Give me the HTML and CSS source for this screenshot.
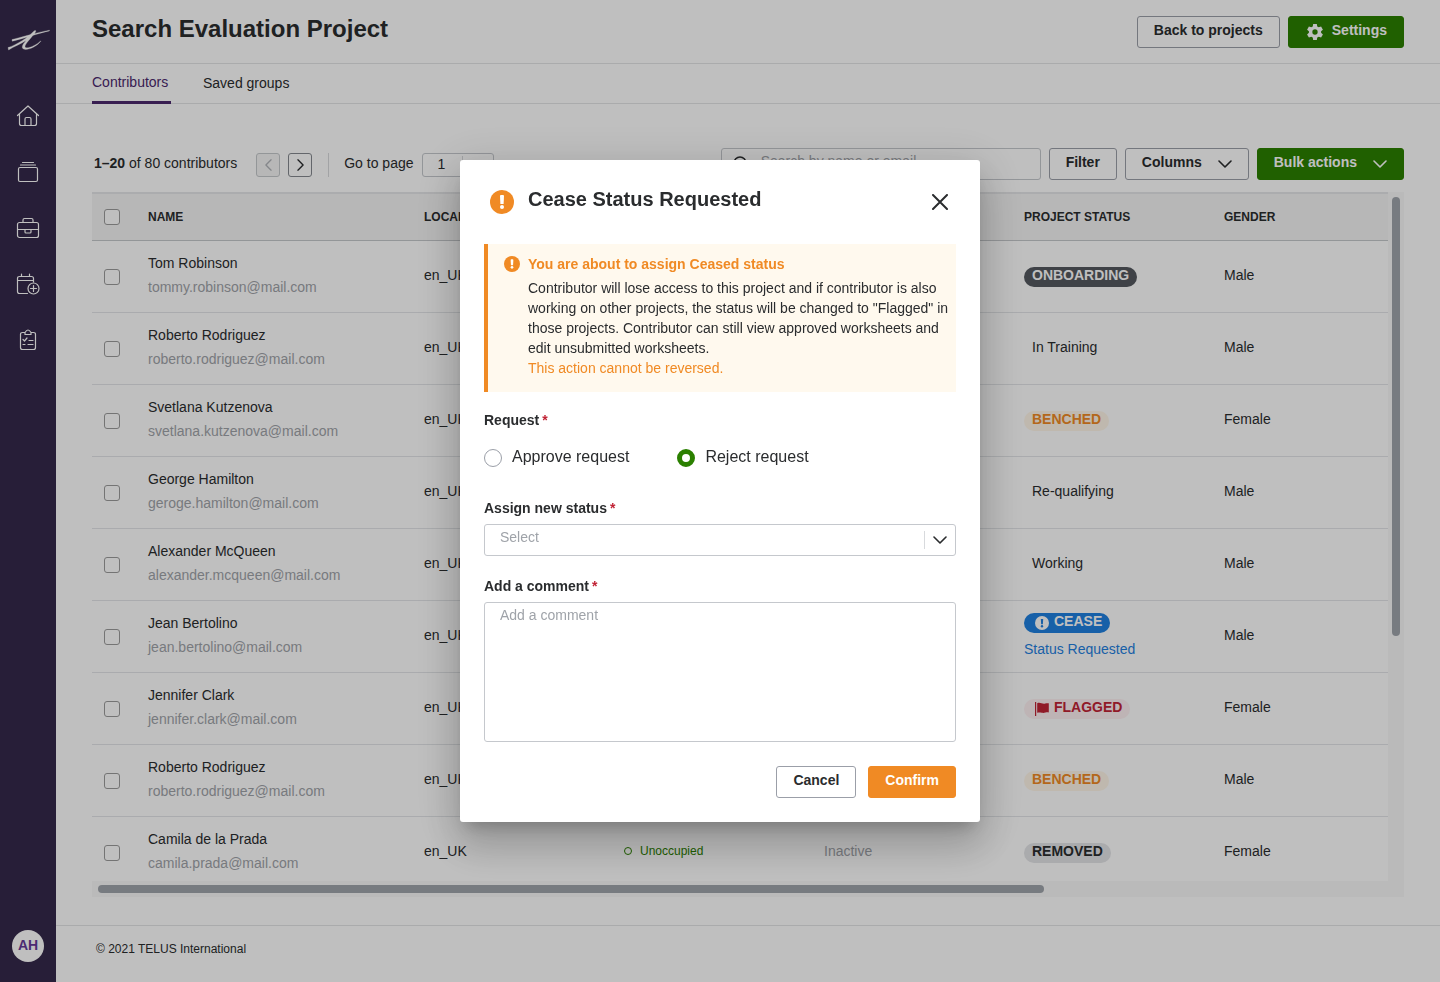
FILE: index.html
```html
<!DOCTYPE html>
<html lang="en">
<head>
<meta charset="utf-8">
<title>Search Evaluation Project</title>
<link rel="stylesheet" href="styles.css">
</head>
<body>
<div class="app">
  <nav class="sidebar" aria-label="Main">
    <a class="logo" href="#" aria-label="TELUS International">
      <svg width="44" height="24" viewBox="0 0 44 24" fill="#fff" stroke="#fff" stroke-width=".3"><path d="M6 11.6C14 9.6 28 5.2 43.500 2.200L43.400 2.900C33 5 17 10.800 6.200 13.200ZM2 19.600C11 16.600 22 9.500 27.500 3.400C29 1.800 30.600 2.400 29.400 4.200C26.500 8.700 18.500 16.200 19 18.800C19.600 21.800 30 17.800 34.600 12.900L34.900 13.200C30 19.200 21 22.600 17.600 21C14.600 19.400 17.500 15.400 20 12.400C14 16.600 8 18.200 2.600 22Z"/></svg>
    </a>
    <div class="nav-links">
      <a class="nav-link" href="#" aria-label="Home"><svg class="icon-line" width="24" height="24" viewBox="0 0 24 24"><path d="M1.500 11.500 12 2l10.500 9.500M3.500 10v9.500q0 2 2 2h13q2 0 2-2V10M9 21.500V15q0-1.500 1.500-1.500h3q1.500 0 1.500 1.500v6.500"/></svg></a>
      <a class="nav-link" href="#" aria-label="Projects"><svg class="icon-line" width="24" height="24" viewBox="0 0 24 24"><rect x="2.500" y="7.500" width="19" height="14" rx="1.500"/><path d="M4.500 5h15M6.500 2.500h11"/></svg></a>
      <a class="nav-link" href="#" aria-label="Jobs"><svg class="icon-line" width="24" height="24" viewBox="0 0 24 24"><rect x="1.500" y="6.500" width="21" height="15" rx="2"/><path d="M7 6.500V4q0-1.500 1.500-1.500h7Q17 2.500 17 4v2.500M1.500 13.500h21M9 13.500V16q0 1 1 1h4q1 0 1-1v-2.500"/></svg></a>
      <a class="nav-link" href="#" aria-label="Schedule"><svg class="icon-line" width="24" height="24" viewBox="0 0 24 24"><path d="M11.500 21.500h-8q-2 0-2-2v-13q0-2 2-2h12q2 0 2 2V10M1.500 8.500h16M5.500 2v2.500M13.500 2v2.500"/><circle cx="17.500" cy="16.500" r="5.500"/><path d="M17.500 13.500v6M14.500 16.500h6"/></svg></a>
      <a class="nav-link" href="#" aria-label="Tasks"><svg class="icon-line" width="24" height="24" viewBox="0 0 24 24"><path d="M9 4.500H6.500q-2 0-2 2v13q0 2 2 2h11q2 0 2-2v-13q0-2-2-2H15M9 6.500v-2q3-5 6 0v2ZM7 11.500l1.500 1.500 2.500-3M13 12.500h4M7 16.500h2M12 16.500h5"/></svg></a>
    </div>
    <button class="avatar" type="button" aria-label="Account AH">AH</button>
  </nav>

  <div class="page">
    <header class="page-header">
      <h1 class="page-title">Search Evaluation Project</h1>
      <div class="button-row">
        <button class="btn" type="button">Back to projects</button>
        <button class="btn btn-green btn-icon" type="button"><svg width="20" height="20" viewBox="0 0 24 24" fill="currentColor"><path fill-rule="evenodd" d="M9.800 2.500h4.400l.5 2.900 1.800 1 2.800-1 2.200 3.800-2.200 1.900v1.900l2.200 1.900-2.200 3.800-2.800-1-1.800 1-.5 2.900H9.800l-.5-2.900-1.800-1-2.800 1-2.200-3.800L4.700 13v-1.900L2.500 9.200l2.200-3.800 2.800 1 1.800-1ZM12 8.800a3.200 3.200 0 1 0 0 6.400 3.200 3.200 0 0 0 0-6.400Z"/></svg><span>Settings</span></button>
      </div>
    </header>
    <nav class="tabs" aria-label="Project sections">
      <a class="tab tab-active" href="#">Contributors</a>
      <a class="tab" href="#">Saved groups</a>
    </nav>

    <main class="content">
      <div class="toolbar">
        <div class="pager">
          <p class="pager-count"><strong>1–20</strong> of 80 contributors</p>
          <button class="step step-disabled" type="button" aria-label="Previous page" disabled><svg width="7" height="12" viewBox="0 0 8 14"><path class="stroke" d="M7 1 1 7l6 6"/></svg></button>
          <button class="step" type="button" aria-label="Next page"><svg width="7" height="12" viewBox="0 0 8 14"><path class="stroke" d="m1 1 6 6-6 6"/></svg></button>
          <label class="goto" for="goto-page">Go to page</label>
          <span class="select-wrap select-small">
            <select class="select" id="goto-page"><option>1</option></select>
          </span>
        </div>
        <div class="button-row">
          <span class="search">
            <svg class="search-icon" width="16" height="16" viewBox="0 0 16 16"><circle class="stroke" cx="7" cy="7" r="6"/><path class="stroke" d="m12 12 3 3"/></svg>
            <input class="search-input" type="search" aria-label="Search" placeholder="Search by name or email">
          </span>
          <button class="btn" type="button">Filter</button>
          <button class="btn btn-menu" type="button">Columns<svg width="14" height="8" viewBox="0 0 14 8"><path class="stroke" d="m1 1 6 6 6-6"/></svg></button>
          <button class="btn btn-green btn-menu" type="button">Bulk actions<svg width="14" height="8" viewBox="0 0 14 8"><path class="stroke" d="m1 1 6 6 6-6"/></svg></button>
        </div>
      </div>

      <div class="table-frame">
        <div class="table-view">
          <table class="table">
            <colgroup><col class="col-check"><col class="col-name"><col class="col-mid"><col class="col-mid"><col class="col-mid"><col class="col-mid"><col></colgroup>
            <thead>
              <tr><th><input class="check" type="checkbox" aria-label="Select all"></th><th>NAME</th><th>LOCALE</th><th></th><th></th><th>PROJECT STATUS</th><th>GENDER</th></tr>
            </thead>
            <tbody>
              <tr><td class="cell-check"><input class="check" type="checkbox" aria-label="Select Tom Robinson"></td><td><div class="name">Tom Robinson</div><div class="mail">tommy.robinson@mail.com</div></td><td>en_UK</td><td></td><td></td><td class="cell-status"><span class="badge badge-dark">ONBOARDING</span></td><td>Male</td></tr>
              <tr><td class="cell-check"><input class="check" type="checkbox" aria-label="Select Roberto Rodriguez"></td><td><div class="name">Roberto Rodriguez</div><div class="mail">roberto.rodriguez@mail.com</div></td><td>en_UK</td><td></td><td></td><td class="cell-status"><span class="badge badge-plain">In Training</span></td><td>Male</td></tr>
              <tr><td class="cell-check"><input class="check" type="checkbox" aria-label="Select Svetlana Kutzenova"></td><td><div class="name">Svetlana Kutzenova</div><div class="mail">svetlana.kutzenova@mail.com</div></td><td>en_UK</td><td></td><td></td><td class="cell-status"><span class="badge badge-orange">BENCHED</span></td><td>Female</td></tr>
              <tr><td class="cell-check"><input class="check" type="checkbox" aria-label="Select George Hamilton"></td><td><div class="name">George Hamilton</div><div class="mail">geroge.hamilton@mail.com</div></td><td>en_UK</td><td></td><td></td><td class="cell-status"><span class="badge badge-plain">Re-qualifying</span></td><td>Male</td></tr>
              <tr><td class="cell-check"><input class="check" type="checkbox" aria-label="Select Alexander McQueen"></td><td><div class="name">Alexander McQueen</div><div class="mail">alexander.mcqueen@mail.com</div></td><td>en_UK</td><td></td><td></td><td class="cell-status"><span class="badge badge-plain">Working</span></td><td>Male</td></tr>
              <tr><td class="cell-check"><input class="check" type="checkbox" aria-label="Select Jean Bertolino"></td><td><div class="name">Jean Bertolino</div><div class="mail">jean.bertolino@mail.com</div></td><td>en_UK</td><td></td><td></td><td class="cell-status"><span class="badge badge-blue"><svg width="14" height="14" viewBox="0 0 24 24"><circle cx="12" cy="12" r="12" fill="#fff"/><path fill="#1f80e0" d="M10 5h4l-.5 9h-3Z"/><circle cx="12" cy="17.500" r="2" fill="#1f80e0"/></svg><span>CEASE</span></span><div class="requested">Status Requested</div></td><td>Male</td></tr>
              <tr><td class="cell-check"><input class="check" type="checkbox" aria-label="Select Jennifer Clark"></td><td><div class="name">Jennifer Clark</div><div class="mail">jennifer.clark@mail.com</div></td><td>en_UK</td><td></td><td></td><td class="cell-status"><span class="badge badge-red"><svg width="14" height="14" viewBox="0 0 14 14" fill="currentColor"><path d="M0 0h1.200v14H0ZM2.200 1.200c3-1.500 5 1.300 8 .4 1.500-.5 2-.5 3.600-.4v9.200c-3-.4-4 .9-7 .4-2-.4-3-.4-4.600 0Z"/></svg><span>FLAGGED</span></span></td><td>Female</td></tr>
              <tr><td class="cell-check"><input class="check" type="checkbox" aria-label="Select Roberto Rodriguez"></td><td><div class="name">Roberto Rodriguez</div><div class="mail">roberto.rodriguez@mail.com</div></td><td>en_UK</td><td></td><td></td><td class="cell-status"><span class="badge badge-orange">BENCHED</span></td><td>Male</td></tr>
              <tr><td class="cell-check"><input class="check" type="checkbox" aria-label="Select Camila de la Prada"></td><td><div class="name">Camila de la Prada</div><div class="mail">camila.prada@mail.com</div></td><td>en_UK</td><td><span class="occupancy">Unoccupied</span></td><td class="inactive">Inactive</td><td class="cell-status"><span class="badge badge-grey">REMOVED</span></td><td>Female</td></tr>
            </tbody>
          </table>
        </div>
        <div class="track track-y"><div class="thumb" style="height: 64.6%"></div></div>
        <div class="track track-x"><div class="thumb" style="width: 72.8%"></div></div>
      </div>
    </main>

    <footer class="footer">© 2021 TELUS International</footer>
  </div>
</div>

<div class="overlay">
  <form class="dialog" role="dialog" aria-modal="true" aria-labelledby="dialog-title">
    <header class="dialog-header">
      <svg width="24" height="24" viewBox="0 0 24 24"><circle cx="12" cy="12" r="12" fill="#f08a24"/><path fill="#fff" d="M10 6q0-1 1-1h2q1 0 1 1l-.4 8h-3.200Z"/><circle cx="12" cy="17" r="2" fill="#fff"/></svg>
      <h2 class="dialog-title" id="dialog-title">Cease Status Requested</h2>
      <button class="close" type="button" aria-label="Close"><svg width="16" height="16" viewBox="0 0 16 16"><path class="stroke-bold" d="m1 1 14 14M15 1 1 15"/></svg></button>
    </header>
    <section class="alert">
      <svg class="alert-icon" width="16" height="16" viewBox="0 0 24 24"><circle cx="12" cy="12" r="12" fill="#f08a24"/><path fill="#fff" d="M10 6q0-1 1-1h2q1 0 1 1l-.4 8h-3.200Z"/><circle cx="12" cy="17" r="2" fill="#fff"/></svg>
      <div>
        <h3 class="alert-title">You are about to assign Ceased status</h3>
        <p>Contributor will lose access to this project and if contributor is also working on other projects, the status will be changed to "Flagged" in those projects. Contributor can still view approved worksheets and edit unsubmitted worksheets.</p>
        <p class="alert-warn">This action cannot be reversed.</p>
      </div>
    </section>
    <fieldset class="request">
      <legend class="field-label">Request<span class="star">*</span></legend>
      <div class="radios">
        <label class="radio-label"><input class="radio" type="radio" name="request"><span>Approve request</span></label>
        <label class="radio-label"><input class="radio" type="radio" name="request" checked><span>Reject request</span></label>
      </div>
    </fieldset>
    <div class="field">
      <label class="field-label" for="status">Assign new status<span class="star">*</span></label>
      <span class="select-wrap">
        <select class="select select-empty" id="status"><option>Select</option></select>
        <svg class="select-arrow" width="14" height="8" viewBox="0 0 14 8"><path class="stroke" d="m1 1 6 6 6-6"/></svg>
      </span>
    </div>
    <div class="field">
      <label class="field-label" for="comment">Add a comment<span class="star">*</span></label>
      <textarea class="textarea" id="comment" placeholder="Add a comment"></textarea>
    </div>
    <div class="dialog-actions">
      <button class="btn" type="button">Cancel</button>
      <button class="btn btn-orange" type="submit">Confirm</button>
    </div>
  </form>
</div>
</body>
</html>
```
FILE: styles.css
```css
*, *::before, *::after { box-sizing: border-box; }

body {
  margin: 0;
  background: #fff;
  color: #2a2c2e;
  font: 14px/20px "Liberation Sans", Arial, sans-serif;
}

h1, h2, h3, p { margin: 0; }
a { color: inherit; text-decoration: none; }
button, input, select, textarea { font: inherit; color: inherit; }
svg { display: block; flex: none; }

.stroke { fill: none; stroke: currentColor; stroke-width: 1.6; stroke-linecap: round; stroke-linejoin: round; }
.stroke-bold { fill: none; stroke: currentColor; stroke-width: 2; stroke-linecap: round; }
.icon-line { fill: none; stroke: #fff; stroke-width: 1.2; stroke-linecap: round; stroke-linejoin: round; }

.app { display: flex; height: 100vh; }

/* Sidebar */
.sidebar {
  display: flex;
  flex-direction: column;
  align-items: center;
  flex: none;
  width: 56px;
  padding: 28px 0 20px;
  background: #35294b;
}
.logo { margin-bottom: 52px; }
.nav-links { display: grid; gap: 32px; }
.nav-link { display: block; }
.avatar {
  width: 32px;
  height: 32px;
  margin-top: auto;
  padding: 0 0 2px;
  border: 0;
  border-radius: 50%;
  background: #fff;
  color: #66389a;
  font-weight: 700;
}

/* Page frame */
.page { display: flex; flex-direction: column; flex: 1; min-width: 0; }
.page-header {
  display: flex;
  justify-content: space-between;
  align-items: flex-start;
  padding: 16px 36px 15px;
  border-bottom: 1px solid #e3e4e6;
}
.page-title { font-size: 24px; line-height: 26px; }
.button-row { display: flex; gap: 8px; }

.tabs {
  display: flex;
  gap: 32px;
  height: 40px;
  padding: 0 36px;
  border-bottom: 1px solid #e3e4e6;
}
.tab { min-width: 79px; height: 40px; padding-top: 9px; }
.tab-active { padding-top: 8px; border-bottom: 3px solid #4b286d; color: #4b286d; }

.content { display: flex; flex-direction: column; flex: 1; min-height: 0; padding: 44px 36px 28px; }
.footer { padding: 13px 40px 23px; border-top: 1px solid #e3e4e6; font-size: 12px; }

/* Buttons */
.btn {
  padding: 3px 16px 7px;
  border: 1px solid #9b9fa8;
  border-radius: 3px;
  background: #fff;
  font-size: 14px;
  font-weight: 700;
  line-height: 20px;
  white-space: nowrap;
}
.btn-green { border-color: #2b8000; background: #2b8000; color: #fff; }
.btn-orange { border-color: #f08a24; background: #f08a24; color: #fff; }
.btn-icon { display: flex; gap: 7px; }
.btn-icon svg { margin: 2px 0 -2px; }
.btn-menu { display: flex; justify-content: space-between; gap: 16px; }
.btn-menu svg { align-self: center; margin-top: 4px; }

/* Toolbar */
.toolbar { display: flex; justify-content: space-between; margin-bottom: 12px; }
.pager { display: flex; align-items: flex-start; padding: 5px 0 0 2px; }
.pager-count { margin-right: 19px; }
.step {
  display: grid;
  place-items: center;
  width: 24px;
  height: 24px;
  margin-right: 8px;
  padding: 0;
  border: 1px solid #85898f;
  border-radius: 3px;
  background: #fff;
}
.step-disabled { border-color: #c5c8cb; background: #f5f5f5; color: #b2b5ba; }
.goto { height: 24px; margin: 0 8px; padding-left: 15px; border-left: 1px solid #d8dadd; }
.search { display: flex; align-items: center; gap: 12px; width: 320px; height: 32px; padding: 0 11px; border: 1px solid #c5c8cd; border-radius: 3px; }
.search-input { flex: 1; min-width: 0; padding: 0 0 6px; border: 0; outline: 0; background: none; }
.search-input::placeholder, .textarea::placeholder { color: #9fa3a9; opacity: 1; }

/* Table */
.table-frame { display: grid; grid-template: minmax(0, 1fr) 16px / minmax(0, 1fr) 16px; flex: 1; min-height: 0; }
.table-view { overflow: hidden; }
.table { width: 100%; border-collapse: separate; border-spacing: 0; table-layout: fixed; }
.col-check { width: 44px; }
.col-name { width: 276px; }
.col-mid { width: 200px; }
.table th {
  height: 49px;
  padding: 0 0 0 12px;
  border-top: 2px solid #e5e6e8;
  border-bottom: 1px solid #c5c8cb;
  background: #f5f5f5;
  font-size: 12px;
  text-align: left;
}
.table td { height: 72px; padding: 0 0 4px 12px; border-bottom: 1px solid #e3e5e8; }
.table .cell-check, .table .cell-status { padding-bottom: 0; }
.check {
  display: block;
  appearance: none;
  width: 16px;
  height: 16px;
  margin: 0;
  border: 1px solid #9b9b9b;
  border-radius: 3px;
  background: #fff;
}
.name { margin-bottom: 4px; }
.mail, .inactive { color: #9fa3a9; }
.badge {
  display: flex;
  gap: 5px;
  width: fit-content;
  padding: 0 8px 4px;
  border-radius: 10px;
  font-weight: 700;
  line-height: 16px;
}
.badge svg { margin: 3px 0 -1px 3px; }
.badge-plain { font-weight: 400; }
.badge-dark { background: #54595f; color: #fff; }
.badge-orange { background: #fff6e8; color: #f08a24; }
.badge-blue { background: #1f80e0; color: #fff; }
.badge-red { background: #fef0f2; color: #c12335; }
.badge-grey { background: #e3e4e7; }
.requested { padding: 6px 0 2px; color: #1f80e0; }
.occupancy { display: flex; align-items: center; gap: 8px; color: #2b8000; font-size: 12px; }
.occupancy::before { content: ""; width: 8px; height: 8px; border: 1px solid #2b8000; border-radius: 50%; }

.track { background: #f8f8f8; }
.track-y { padding: 5px 4px; }
.track-x { grid-column: 1 / -1; padding: 4px 6px; }
.track-x .thumb { height: 8px; }
.thumb { border-radius: 4px; background: #9fa4ab; }

/* Dialog */
.overlay { position: fixed; inset: 0; display: grid; place-items: center; background: rgba(0, 0, 0, 0.25); }
.dialog {
  width: 520px;
  padding: 24px;
  border-radius: 3px;
  background: #fff;
  box-shadow: 0 11px 15px -7px rgba(0, 0, 0, 0.2), 0 24px 38px 3px rgba(0, 0, 0, 0.14), 0 9px 46px 8px rgba(0, 0, 0, 0.12);
}
.dialog-header { display: flex; align-items: flex-start; gap: 14px; height: 60px; padding: 6px 8px 0 6px; }
.dialog-title { flex: 1; margin-top: -4px; font-size: 20px; line-height: 26px; }
.close { margin-top: 4px; padding: 0; border: 0; background: none; }

.alert { display: flex; gap: 8px; padding: 10px 4px 14px 16px; border-left: 4px solid #f08a24; background: #fff9ee; }
.alert-icon { margin-top: 2px; }
.alert-title { margin-bottom: 4px; font-size: 14px; color: #f08a24; }
.alert-warn { color: #f08a24; }

.request { margin: 18px 0 28px; padding: 0; border: 0; }
.field-label { display: block; padding: 0; font-weight: 700; }
.star { margin-left: 3px; color: #c12335; }
.radios { display: flex; gap: 48px; padding-top: 16px; }
.radio-label { display: flex; align-items: center; gap: 10px; font-size: 16px; line-height: 22px; }
.radio-label span { padding-bottom: 2px; }
.radio {
  appearance: none;
  width: 18px;
  height: 18px;
  margin: 0;
  border: 1px solid #9b9fa8;
  border-radius: 50%;
  background: #fff;
}
.radio:checked { border: 5px solid #2b8000; }

.field { display: grid; gap: 6px; margin-bottom: 20px; }
.select-wrap { position: relative; display: block; }
.select {
  display: block;
  appearance: none;
  width: 100%;
  height: 32px;
  padding: 1px 15px 7px;
  border: 1px solid #c5c8cd;
  border-radius: 3px;
  background: #fff;
}
.select-empty { color: #9fa3a9; }
.select-wrap::after { content: ""; position: absolute; top: 7px; right: 31px; bottom: 7px; border-left: 1px solid #d8dadd; }
.select-arrow { position: absolute; top: 12px; right: 9px; }
.select-small { width: 72px; }
.select-small .select { height: 24px; padding: 0 15px 5px; }
.select-small::after { top: 3px; bottom: 3px; }
.textarea {
  display: block;
  width: 100%;
  height: 140px;
  padding: 2px 15px;
  border: 1px solid #c5c8cd;
  border-radius: 3px;
  resize: none;
}
.dialog-actions { display: flex; justify-content: flex-end; gap: 12px; margin-top: 24px; }
```
